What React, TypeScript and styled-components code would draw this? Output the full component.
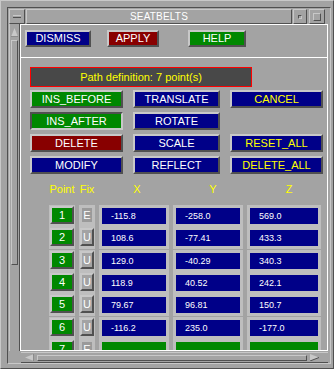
import React from 'react'
import styled, { createGlobalStyle } from 'styled-components'

const BG = '#a3a3a3'
const LIGHT = '#c8c8c8'
const DARK = '#505050'
const CELL = '#bebebe'
const BLUE = '#000088'
const GREEN = '#008800'
const RED = '#880000'
const YELLOW = '#ffff00'

const Global = createGlobalStyle`
  body {
    margin: 0;
    background: ${BG};
    font-family: "Liberation Sans", Arial, sans-serif;
  }
`

const Window = styled.div`
  width: 334px;
  height: 369px;
  box-sizing: border-box;
  background: ${BG};
  border-top: 1px solid ${LIGHT};
  border-left: 1px solid ${LIGHT};
  border-right: 1px solid ${DARK};
  border-bottom: 1px solid ${DARK};
  overflow: hidden;
`

const Frame = styled.div`
  margin: 6px 0 0 6px;
  padding: 1px 0 0 1px;
  width: 321px;
  height: 354px;
  border: 1px solid;
  border-color: ${DARK} ${LIGHT} ${LIGHT} ${DARK};
`

const TitleRow = styled.div`
  display: flex;
  height: 15px;
`

const Bevel = styled.div`
  box-sizing: border-box;
  border: 1px solid;
  border-color: ${LIGHT} ${DARK} ${DARK} ${LIGHT};
  background: ${BG};
`

const MenuBtn = styled(Bevel)`
  width: 16px;
  display: flex;
  align-items: center;
  justify-content: center;
  &::after {
    content: '';
    width: 8px;
    height: 1px;
    border-top: 1px solid ${LIGHT};
    border-bottom: 1px solid ${DARK};
  }
`

const TitleBar = styled(Bevel)`
  width: 266px;
  margin-left: 1px;
  color: #fff;
  font-size: 10px;
  line-height: 13px;
  text-align: center;
  letter-spacing: 0.2px;
`

const MinBtn = styled(Bevel)`
  width: 14px;
  margin-left: 1px;
  display: flex;
  align-items: center;
  justify-content: center;
  &::after {
    content: '';
    width: 2px;
    height: 2px;
    border: 1px solid;
    border-color: ${DARK} ${LIGHT} ${LIGHT} ${DARK};
  }
`

const MaxBtn = styled(Bevel)`
  width: 16px;
  margin-left: 2px;
  display: flex;
  align-items: center;
  justify-content: center;
  &::after {
    content: '';
    width: 6px;
    height: 6px;
    border: 1px solid;
    border-color: ${LIGHT} ${DARK} ${DARK} ${LIGHT};
  }
`

const Body = styled.div`
  display: flex;
`

const VScroll = styled.div`
  width: 11px;
  height: 327px;
  box-sizing: border-box;
  border-left: 1px solid ${LIGHT};
  border-right: 1px solid ${DARK};
  display: flex;
  flex-direction: column;
  align-items: center;
  padding-top: 4px;
`

const Thumb = styled(Bevel)`
  width: 7px;
  height: 225px;
  margin-top: 3px;
`

const Content = styled.div`
  width: 308px;
  height: 327px;
  box-sizing: border-box;
  border: 1px solid #fff;
  overflow: hidden;
`

const TopBar = styled.div`
  border-bottom: 1px solid #fff;
  display: flex;
  align-items: flex-start;
  padding: 5px 0 0 4px;
  box-sizing: border-box;
  height: 33px;
`

const Button = styled.div<{ $face: string; $text?: string; $w: number; $h?: number; $in?: boolean }>`
  box-sizing: border-box;
  width: ${p => p.$w}px;
  height: ${p => p.$h ?? 18}px;
  border: 2px solid;
  border-color: ${p => (p.$in ? `${DARK} ${LIGHT} ${LIGHT} ${DARK}` : `${LIGHT} ${DARK} ${DARK} ${LIGHT}`)};
  background: ${p => p.$face};
  color: ${p => p.$text ?? '#fff'};
  font-size: 11px;
  line-height: ${p => (p.$h ?? 18) - 4}px;
  text-align: center;
  white-space: nowrap;
  overflow: hidden;
`

const Lower = styled.div`
  padding-left: 9px;
`

const PathBar = styled.div`
  margin-top: 9px;
  width: 222px;
  height: 20px;
  box-sizing: border-box;
  border: 1px solid #ff0000;
  background: #484848;
  color: ${YELLOW};
  font-size: 11px;
  line-height: 18px;
  text-align: center;
`

const ButtonGrid = styled.div`
  margin-top: 3px;
  display: grid;
  grid-template-columns: 93px 87px 93px;
  grid-auto-rows: 18px;
  column-gap: 10px;
  row-gap: 4px;
`

const cols = '26px 16px 70px 70px 74px'

const Headers = styled.div`
  margin: 8px 0 0 19px;
  display: grid;
  grid-template-columns: ${cols};
  column-gap: 4px;
  height: 14px;
`

const Head = styled.div<{ $shift?: number }>`
  color: ${YELLOW};
  font-size: 11px;
  line-height: 14px;
  text-align: center;
  white-space: nowrap;
  padding-left: ${p => p.$shift ?? 0}px;
`

const Table = styled.div`
  margin: 9px 0 0 19px;
`

const Row = styled.div<{ $sep?: boolean }>`
  display: grid;
  grid-template-columns: ${cols};
  column-gap: 4px;
  height: 22px;
  margin-bottom: ${p => (p.$sep ? 1 : 0)}px;
`

const Cell = styled.div`
  background: ${CELL};
  box-sizing: border-box;
  padding: 3px 3px 0;
`

const BtnCell = styled.div`
  background: ${CELL};
  padding: 1px 0 0 1px;
`

const FixBtn = styled.div<{ $flat?: boolean }>`
  box-sizing: border-box;
  width: 14px;
  height: 18px;
  border: 2px solid;
  border-color: ${p => (p.$flat ? `${CELL}` : `${LIGHT} ${DARK} ${DARK} ${LIGHT}`)};
  background: ${p => (p.$flat ? '#9a9a9a' : BG)};
  color: #fff;
  font-size: 11px;
  line-height: 14px;
  text-align: center;
`

const Field = styled.div<{ $green?: boolean }>`
  height: 16px;
  background: ${p => (p.$green ? GREEN : BLUE)};
  color: #fff;
  font-size: 9px;
  line-height: 16px;
  padding-left: 9px;
`

const HScroll = styled.div`
  margin-left: 12px;
  margin-top: 1px;
  width: 307px;
  height: 11px;
  box-sizing: border-box;
  border-top: 1px solid ${LIGHT};
  border-bottom: 1px solid ${DARK};
  display: flex;
  align-items: center;
  padding-left: 4px;
  gap: 3px;
`

const HThumb = styled(Bevel)`
  width: 270px;
  height: 6px;
`

const rows = [
  { n: 1, fix: 'E', x: '-115.8', y: '-258.0', z: '569.0' },
  { n: 2, fix: 'U', x: '108.6', y: '-77.41', z: '433.3', sep: true },
  { n: 3, fix: 'U', x: '129.0', y: '-40.29', z: '340.3' },
  { n: 4, fix: 'U', x: '118.9', y: '40.52', z: '242.1' },
  { n: 5, fix: 'U', x: '79.67', y: '96.81', z: '150.7', sep: true },
  { n: 6, fix: 'U', x: '-116.2', y: '235.0', z: '-177.0' },
  { n: 7, fix: 'E', x: '', y: '', z: '', green: true },
]

export default function App() {
  return (
    <>
      <Global />
      <Window>
        <Frame>
          <TitleRow>
            <MenuBtn />
            <TitleBar>SEATBELTS</TitleBar>
            <MinBtn />
            <MaxBtn />
          </TitleRow>
          <Body>
            <VScroll>
              <svg width="7" height="9" viewBox="0 0 7 9">
                <polygon points="3.5,0 7,9 0,9" fill={LIGHT} />
                <polyline points="7,9 0,9" stroke={DARK} fill="none" />
              </svg>
              <Thumb />
            </VScroll>
            <Content>
              <TopBar>
                <Button $face={BLUE} $w={66} $h={17}>DISMISS</Button>
                <Button $face={RED} $w={52} $h={17} style={{ marginLeft: 16 }}>APPLY</Button>
                <Button $face={GREEN} $w={58} $h={17} style={{ marginLeft: 29 }}>HELP</Button>
              </TopBar>
              <Lower>
                <PathBar>Path definition: 7 point(s)</PathBar>
                <ButtonGrid>
                  <Button $face={GREEN} $w={93}>INS_BEFORE</Button>
                  <Button $face={BLUE} $w={87}>TRANSLATE</Button>
                  <Button $face={BLUE} $w={93} $text={YELLOW}>CANCEL</Button>
                  <Button $face={GREEN} $w={93} $in>INS_AFTER</Button>
                  <Button $face={BLUE} $w={87}>ROTATE</Button>
                  <div />
                  <Button $face={RED} $w={93}>DELETE</Button>
                  <Button $face={BLUE} $w={87}>SCALE</Button>
                  <Button $face={BLUE} $w={93} $text={YELLOW}>RESET_ALL</Button>
                  <Button $face={BLUE} $w={93}>MODIFY</Button>
                  <Button $face={BLUE} $w={87}>REFLECT</Button>
                  <Button $face={BLUE} $w={93} $text={YELLOW}>DELETE_ALL</Button>
                </ButtonGrid>
                <Headers>
                  <Head>Point</Head>
                  <Head>Fix</Head>
                  <Head $shift={6}>X</Head>
                  <Head $shift={10}>Y</Head>
                  <Head $shift={10}>Z</Head>
                </Headers>
                <Table>
                  {rows.map(r => (
                    <Row key={r.n} $sep={r.sep}>
                      <BtnCell>
                        <Button $face={GREEN} $w={24}>{r.n}</Button>
                      </BtnCell>
                      <BtnCell>
                        <FixBtn $flat={r.fix === 'E'}>{r.fix}</FixBtn>
                      </BtnCell>
                      <Cell><Field $green={r.green}>{r.x}</Field></Cell>
                      <Cell><Field $green={r.green}>{r.y}</Field></Cell>
                      <Cell><Field $green={r.green}>{r.z}</Field></Cell>
                    </Row>
                  ))}
                </Table>
              </Lower>
            </Content>
          </Body>
          <HScroll>
            <svg width="9" height="7" viewBox="0 0 9 7">
              <polygon points="0,3.5 9,0 9,7" fill={LIGHT} />
              <polyline points="9,0 9,7" stroke={DARK} fill="none" />
            </svg>
            <HThumb />
            <svg width="9" height="7" viewBox="0 0 9 7">
              <polygon points="9,3.5 0,0 0,7" fill={LIGHT} />
              <polyline points="0,7 9,3.5" stroke={DARK} fill="none" />
            </svg>
          </HScroll>
        </Frame>
      </Window>
    </>
  )
}
